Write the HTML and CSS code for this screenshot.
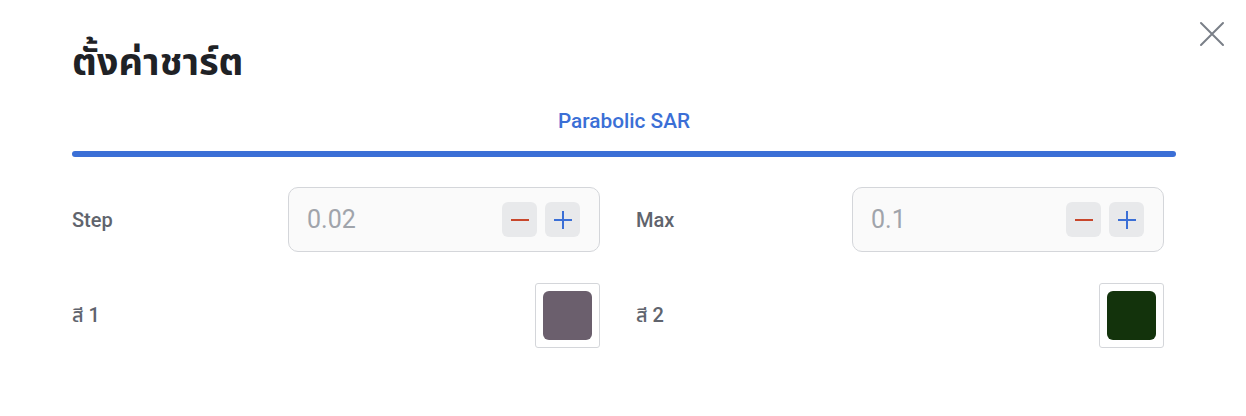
FILE: index.html
```html
<!DOCTYPE html>
<html lang="th">
<head>
<meta charset="utf-8">
<title>ตั้งค่าชาร์ต</title>
<link rel="stylesheet" href="styles.css">
</head>
<body>
<div class="dialog">
  <button class="close" aria-label="close">
    <svg width="26" height="26" viewBox="0 0 26 26"><path d="M2 2 L24 24 M24 2 L2 24" stroke="#7a7f88" stroke-width="2" stroke-linecap="round" fill="none"/></svg>
  </button>
  <h1 class="title">ตั้งค่าชาร์ต</h1>
  <div class="tabs">
    <div class="tab">Parabolic SAR</div>
    <div class="tab-bar"></div>
  </div>
  <div class="grid">
    <div class="field">
      <span class="label">Step</span>
      <div class="number">
        <span class="value">0.02</span>
        <div class="steppers">
          <button class="step minus"><svg width="20" height="20" viewBox="0 0 20 20"><path d="M1 10 H19" stroke="#c8462b" stroke-width="2"/></svg></button>
          <button class="step plus"><svg width="20" height="20" viewBox="0 0 20 20"><path d="M1 10 H19 M10 1 V19" stroke="#3b6fd6" stroke-width="2"/></svg></button>
        </div>
      </div>
    </div>
    <div class="field">
      <span class="label">Max</span>
      <div class="number">
        <span class="value">0.1</span>
        <div class="steppers">
          <button class="step minus"><svg width="20" height="20" viewBox="0 0 20 20"><path d="M1 10 H19" stroke="#c8462b" stroke-width="2"/></svg></button>
          <button class="step plus"><svg width="20" height="20" viewBox="0 0 20 20"><path d="M1 10 H19 M10 1 V19" stroke="#3b6fd6" stroke-width="2"/></svg></button>
        </div>
      </div>
    </div>
    <div class="field">
      <span class="label">สี 1</span>
      <div class="swatch-box"><div class="swatch" style="background:#6b5f6d"></div></div>
    </div>
    <div class="field">
      <span class="label">สี 2</span>
      <div class="swatch-box"><div class="swatch" style="background:#13330c"></div></div>
    </div>
  </div>
</div>
</body>
</html>
```

FILE: styles.css
```css
* { box-sizing: border-box; }
html, body {
  margin: 0;
  background: #ffffff;
  font-family: Roboto, "Noto Sans", "Noto Sans Thai", "DejaVu Sans", sans-serif;
}
.dialog {
  position: relative;
  width: 1246px;
  height: 416px;
  padding: 0 70px 0 72px;
}
.close {
  position: absolute;
  top: 21px;
  right: 21px;
  border: 0;
  background: none;
  padding: 0;
  width: 26px;
  height: 26px;
  cursor: pointer;
}
.title {
  margin: 0;
  padding-top: 38px;
  font-size: 38px;
  line-height: 48px;
  font-weight: 700;
  color: #1f2226;
}
.tabs {
  margin-top: 22px;
}
.tab {
  text-align: center;
  font-size: 20.8px;
  line-height: 26px;
  font-weight: 500;
  color: #3b6fd6;
  padding-bottom: 17px;
}
.tab-bar {
  height: 6px;
  border-radius: 3px;
  background: #3b6fd6;
}
.grid {
  margin-top: 30px;
  display: grid;
  grid-template-columns: 528px 528px;
  column-gap: 36px;
  row-gap: 31px;
}
.field {
  display: flex;
  justify-content: space-between;
  align-items: center;
}
.label {
  font-size: 20px;
  font-weight: 500;
  color: #60646d;
}
.number {
  width: 312px;
  height: 65px;
  border: 1px solid #d4d6da;
  border-radius: 10px;
  background: #fafafa;
  display: flex;
  align-items: center;
  justify-content: space-between;
  padding: 0 19px 0 18px;
}
.value {
  font-size: 25px;
  color: #a0a4ab;
}
.steppers {
  display: flex;
  gap: 8px;
}
.step {
  width: 35px;
  height: 35px;
  border: 0;
  padding: 0;
  border-radius: 6px;
  background: #e8e9eb;
  display: flex;
  align-items: center;
  justify-content: center;
}
.swatch-box {
  width: 65px;
  height: 65px;
  border: 1px solid #d4d6da;
  border-radius: 3px;
  padding: 7px;
}
.swatch {
  width: 100%;
  height: 100%;
  border-radius: 6px;
}
```
